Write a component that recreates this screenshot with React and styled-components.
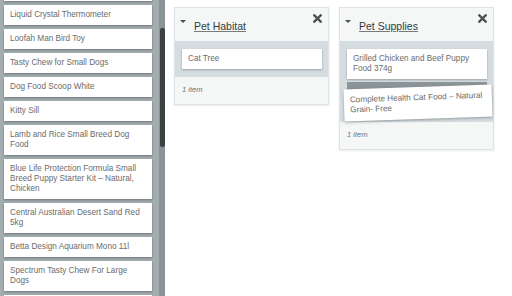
import React, { useLayoutEffect, useRef } from "react";
import styled, { createGlobalStyle } from "styled-components";

const GlobalStyle = createGlobalStyle`
  html, body {
    margin: 0;
    padding: 0;
    background: #ffffff;
    font-family: "Liberation Sans", Arial, sans-serif;
  }
`;

const Page = styled.div`
  display: flex;
  height: 296px;
  overflow: hidden;
`;

const Sidebar = styled.div`
  display: flex;
  flex: none;
  height: 296px;
`;

const ScrollArea = styled.div`
  width: 159px;
  height: 296px;
  overflow: hidden;
  background: #a3adb0;
`;

const ScrollTrack = styled.div`
  width: 6px;
  background: #8a9497;
  display: flex;
  flex-direction: column;
  align-items: flex-end;
`;

const Thumb = styled.div`
  width: 5px;
  height: 119px;
  margin-top: 28px;
  background: #3b4143;
  border-radius: 2px;
`;

const ItemList = styled.div`
  display: flex;
  flex-direction: column;
  gap: 4px;
  padding: 4px 7px 4px 4px;
`;

const Card = styled.div`
  background: #ffffff;
  box-sizing: border-box;
  padding: 5px 9px 5px 6px;
  font-size: 8.2px;
  line-height: 10px;
  color: #6b6b6b;
  box-shadow: 0 1px 2px rgba(40, 50, 55, 0.45);
`;

const Board = styled.div`
  flex: 1;
  display: flex;
  align-items: flex-start;
  gap: 10px;
  padding: 7px 9px;
`;

const Column = styled.div`
  width: 153px;
  flex: none;
  border: 1px solid #dde2e4;
  box-shadow: 0 1px 2px rgba(0, 0, 0, 0.08);
  background: #f5f7f7;
`;

const Header = styled.div`
  display: flex;
  align-items: flex-start;
  height: 33px;
  box-sizing: border-box;
  padding: 5px 5px 0 5px;
`;

const Caret = styled.span`
  width: 0;
  height: 0;
  margin-top: 7px;
  border-left: 3px solid transparent;
  border-right: 3px solid transparent;
  border-top: 3px solid #4a4f52;
`;

const Title = styled.span`
  margin: 7px 0 0 8px;
  font-size: 10.5px;
  color: #333b3f;
  text-decoration: underline;
  text-decoration-color: #7a7a7a;
  text-underline-offset: 1px;
  flex: 1;
`;

const Close = styled.button`
  border: 0;
  padding: 0;
  margin: 1px 1px 0 0;
  background: none;
  display: flex;
  cursor: pointer;
`;

const Body = styled.div`
  background: #d6dde0;
  padding: 8px 6px 8px 7px;
  display: flex;
  flex-direction: column;
  gap: 3px;
`;

const ColumnCard = styled(Card)`
  padding: 5px 6px;
  box-shadow: 0 1px 2px rgba(40, 50, 55, 0.35);
`;

const Placeholder = styled.div`
  position: relative;
  height: 32px;
  background: #8b9598;
`;

const DraggedCard = styled(Card)`
  position: absolute;
  top: 5px;
  left: -3px;
  width: 148px;
  padding: 6px 6px;
  transform: rotate(-2deg);
  box-shadow: 0 1px 3px rgba(40, 50, 55, 0.4);
`;

const Footer = styled.div`
  padding: 8px 7px 10px;
  font-size: 7.5px;
  font-style: italic;
  color: #6e7376;
`;

const before = ["Tropical Fish Flakes 50g", "Cat Scratching Post", "Small Animal Hay 1kg"];

const items = [
  "Liquid Crystal Thermometer",
  "Loofah Man Bird Toy",
  "Tasty Chew for Small Dogs",
  "Dog Food Scoop White",
  "Kitty Sill",
  "Lamb and Rice Small Breed Dog Food",
  "Blue Life Protection Formula Small Breed Puppy Starter Kit – Natural, Chicken",
  "Central Australian Desert Sand Red 5kg",
  "Betta Design Aquarium Mono 11l",
  "Spectrum Tasty Chew For Large Dogs",
];

const after = [
  "Parrot Rope Perch",
  "Hamster Exercise Wheel",
  "Adult Dry Dog Food Chicken 3kg",
  "Catnip Mouse Toy",
  "Reptile Heat Mat Small",
  "Aquarium Gravel Natural 5kg",
  "Senior Cat Food Ocean Fish and Rice Recipe",
  "Rabbit Water Bottle",
  "Dog Lead Reflective Blue",
  "Bird Seed Mix Budgie 1kg",
  "Flea and Tick Collar for Cats",
  "Stainless Steel Pet Bowl",
];

const CloseIcon = () => (
  <svg width="9" height="9" viewBox="0 0 10 10">
    <path d="M1.5 1.5 L8.5 8.5 M8.5 1.5 L1.5 8.5" stroke="#4d5254" strokeWidth="2.6" strokeLinecap="square" />
  </svg>
);

const Lane = ({ title, children }) => (
  <Column>
    <Header>
      <Caret />
      <Title>{title}</Title>
      <Close aria-label="Remove">
        <CloseIcon />
      </Close>
    </Header>
    <Body>{children}</Body>
    <Footer>1 item</Footer>
  </Column>
);

const App = () => {
  const listRef = useRef(null);

  useLayoutEffect(() => {
    if (listRef.current) listRef.current.scrollTop = 71;
  }, []);

  return (
    <Page>
      <GlobalStyle />
      <Sidebar>
        <ScrollArea ref={listRef}>
          <ItemList>
            {[...before, ...items, ...after].map(name => (
              <Card key={name}>{name}</Card>
            ))}
          </ItemList>
        </ScrollArea>
        <ScrollTrack>
          <Thumb />
        </ScrollTrack>
      </Sidebar>
      <Board>
        <Lane title="Pet Habitat">
          <ColumnCard>Cat Tree</ColumnCard>
        </Lane>
        <Lane title="Pet Supplies">
          <ColumnCard>Grilled Chicken and Beef Puppy Food 374g</ColumnCard>
          <Placeholder>
            <DraggedCard>Complete Health Cat Food – Natural Grain- Free</DraggedCard>
          </Placeholder>
        </Lane>
      </Board>
    </Page>
  );
};

export default App;
